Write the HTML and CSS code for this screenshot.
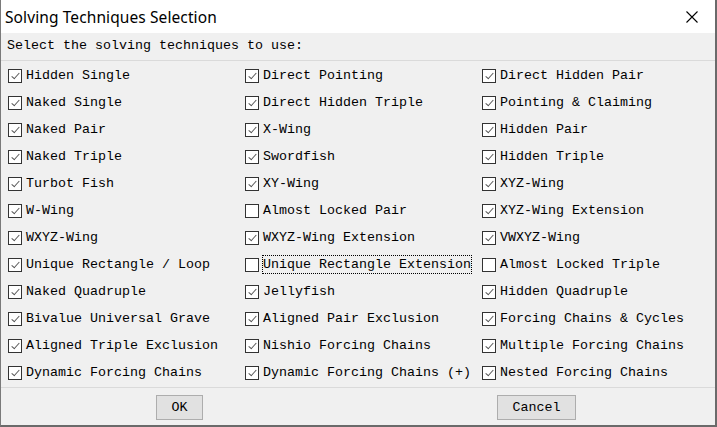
FILE: index.html
```html
<!DOCTYPE html>
<html>
<head>
<meta charset="utf-8">
<link rel="stylesheet" href="styles.css">
</head>
<body>
<div class="window">
  <div class="titlebar">
    <span class="title">Solving Techniques Selection</span>
    <svg class="close" width="12" height="12" viewBox="0 0 12 12"><path d="M0.5 0.5 L11.5 11.5 M11.5 0.5 L0.5 11.5" stroke="#000" stroke-width="1.1" fill="none"/></svg>
  </div>
  <div class="body">
    <div class="prompt">Select the solving techniques to use:</div>
    <div class="grid">
      <label class="item"><span class="box on"></span><span class="lbl">Hidden Single</span></label>
      <label class="item"><span class="box on"></span><span class="lbl">Direct Pointing</span></label>
      <label class="item"><span class="box on"></span><span class="lbl">Direct Hidden Pair</span></label>
      <label class="item"><span class="box on"></span><span class="lbl">Naked Single</span></label>
      <label class="item"><span class="box on"></span><span class="lbl">Direct Hidden Triple</span></label>
      <label class="item"><span class="box on"></span><span class="lbl">Pointing &amp; Claiming</span></label>
      <label class="item"><span class="box on"></span><span class="lbl">Naked Pair</span></label>
      <label class="item"><span class="box on"></span><span class="lbl">X-Wing</span></label>
      <label class="item"><span class="box on"></span><span class="lbl">Hidden Pair</span></label>
      <label class="item"><span class="box on"></span><span class="lbl">Naked Triple</span></label>
      <label class="item"><span class="box on"></span><span class="lbl">Swordfish</span></label>
      <label class="item"><span class="box on"></span><span class="lbl">Hidden Triple</span></label>
      <label class="item"><span class="box on"></span><span class="lbl">Turbot Fish</span></label>
      <label class="item"><span class="box on"></span><span class="lbl">XY-Wing</span></label>
      <label class="item"><span class="box on"></span><span class="lbl">XYZ-Wing</span></label>
      <label class="item"><span class="box on"></span><span class="lbl">W-Wing</span></label>
      <label class="item"><span class="box"></span><span class="lbl">Almost Locked Pair</span></label>
      <label class="item"><span class="box on"></span><span class="lbl">XYZ-Wing Extension</span></label>
      <label class="item"><span class="box on"></span><span class="lbl">WXYZ-Wing</span></label>
      <label class="item"><span class="box on"></span><span class="lbl">WXYZ-Wing Extension</span></label>
      <label class="item"><span class="box on"></span><span class="lbl">VWXYZ-Wing</span></label>
      <label class="item"><span class="box on"></span><span class="lbl">Unique Rectangle / Loop</span></label>
      <label class="item"><span class="box"></span><span class="lbl focus">Unique Rectangle Extension</span></label>
      <label class="item"><span class="box"></span><span class="lbl">Almost Locked Triple</span></label>
      <label class="item"><span class="box on"></span><span class="lbl">Naked Quadruple</span></label>
      <label class="item"><span class="box on"></span><span class="lbl">Jellyfish</span></label>
      <label class="item"><span class="box on"></span><span class="lbl">Hidden Quadruple</span></label>
      <label class="item"><span class="box on"></span><span class="lbl">Bivalue Universal Grave</span></label>
      <label class="item"><span class="box on"></span><span class="lbl">Aligned Pair Exclusion</span></label>
      <label class="item"><span class="box on"></span><span class="lbl">Forcing Chains &amp; Cycles</span></label>
      <label class="item"><span class="box on"></span><span class="lbl">Aligned Triple Exclusion</span></label>
      <label class="item"><span class="box on"></span><span class="lbl">Nishio Forcing Chains</span></label>
      <label class="item"><span class="box on"></span><span class="lbl">Multiple Forcing Chains</span></label>
      <label class="item"><span class="box on"></span><span class="lbl">Dynamic Forcing Chains</span></label>
      <label class="item"><span class="box on"></span><span class="lbl">Dynamic Forcing Chains (+)</span></label>
      <label class="item"><span class="box on"></span><span class="lbl">Nested Forcing Chains</span></label>
    </div>
    <div class="footer">
      <div class="cell"><button class="btn ok">OK</button></div>
      <div class="cell"><button class="btn cancel">Cancel</button></div>
    </div>
  </div>
</div>
</body>
</html>
```
FILE: styles.css
```css
html, body {
  margin: 0;
  padding: 0;
  background: #f0f0f0;
}
.window {
  width: 717px;
  height: 427px;
  box-sizing: border-box;
  border: 1px solid #7a7a7a;
  border-top: none;
  border-right: 2px solid #6a6a6a;
  border-bottom: 2px solid #6a6a6a;
  background: #f0f0f0;
  display: flex;
  flex-direction: column;
}
.titlebar {
  height: 33px;
  background: #fff;
  display: flex;
  align-items: center;
  justify-content: space-between;
  padding: 0 17px 0 4px;
  flex-shrink: 0;
}
.title {
  font-family: "Noto Sans", sans-serif;
  font-size: 15.5px;
  color: #000;
  letter-spacing: 0.1px;
}
.close {
  display: block;
  margin-top: 1px;
}
.body {
  flex: 1;
  display: flex;
  flex-direction: column;
  font-family: "Liberation Mono", monospace;
  font-size: 13.33px;
  color: #000;
}
.prompt {
  height: 27px;
  line-height: 26px;
  padding-left: 6px;
  border-bottom: 1px solid #dadada;
}
.grid {
  display: grid;
  grid-template-columns: 237px 237px 237px;
  grid-auto-rows: 27px;
  padding-left: 7px;
  padding-top: 1px;
  border-bottom: 1px solid #dadada;
  padding-bottom: 1px;
}
.item {
  display: flex;
  align-items: center;
  gap: 4px;
}
.box {
  width: 14px;
  height: 14px;
  box-sizing: border-box;
  border: 1px solid #333;
  background: #fff;
  flex-shrink: 0;
  position: relative;
}
.box.on::after {
  content: "";
  position: absolute;
  left: 2px;
  top: 0px;
  width: 7px;
  height: 3px;
  border-left: 1.2px solid #555;
  border-bottom: 1.2px solid #555;
  transform: translate(0.5px, 3px) rotate(-48deg);
  transform-origin: center;
}
.lbl {
  white-space: nowrap;
  padding: 1px 0;
  border: 1px solid transparent;
  margin-left: -1px;
}
.lbl.focus {
  border: 1px dotted #000;
}
.footer {
  display: grid;
  grid-template-columns: 1fr 1fr;
  padding-top: 7px;
}
.cell {
  display: flex;
  justify-content: center;
}
.btn {
  font-family: "Liberation Mono", monospace;
  font-size: 13.33px;
  color: #000;
  height: 25px;
  background: #e1e1e1;
  border: 1px solid #adadad;
  padding: 0;
}
.btn.ok {
  width: 47px;
}
.btn.cancel {
  width: 79px;
}
```
